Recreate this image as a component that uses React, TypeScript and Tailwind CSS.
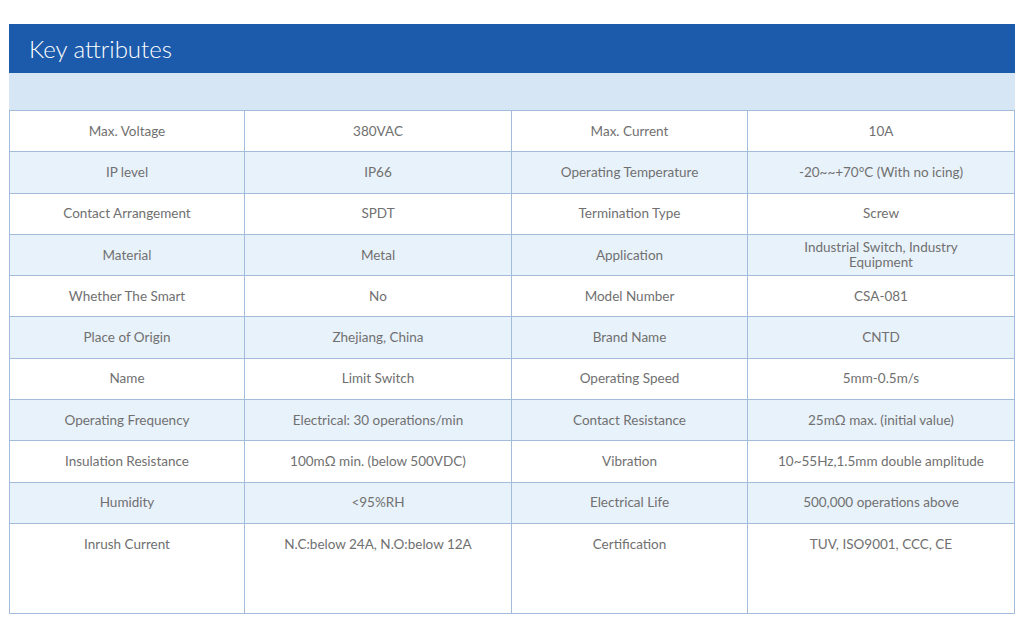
import React from 'react';

const rows: [string, string, string, string][] = [
    ['Max. Voltage', '380VAC', 'Max. Current', '10A'],
    ['IP level', 'IP66', 'Operating Temperature', '-20~~+70°C (With no icing)'],
    ['Contact Arrangement', 'SPDT', 'Termination Type', 'Screw'],
    ['Material', 'Metal', 'Application', 'Industrial Switch, Industry Equipment'],
    ['Whether The Smart', 'No', 'Model Number', 'CSA-081'],
    ['Place of Origin', 'Zhejiang, China', 'Brand Name', 'CNTD'],
    ['Name', 'Limit Switch', 'Operating Speed', '5mm-0.5m/s'],
    ['Operating Frequency', 'Electrical: 30 operations/min', 'Contact Resistance', '25mΩ max. (initial value)'],
    ['Insulation Resistance', '100mΩ min. (below 500VDC)', 'Vibration', '10~55Hz,1.5mm double amplitude'],
    ['Humidity', '<95%RH', 'Electrical Life', '500,000 operations above'],
    ['Inrush Current', 'N.C:below 24A, N.O:below 12A', 'Certification', 'TUV, ISO9001, CCC, CE'],
];

const App: React.FC = () => {
    return (
        <div className="w-[1024px] h-[622px] bg-white pt-6 px-[9px] font-['Lato','Noto_Sans',sans-serif] text-[#707070]">
            <div className="h-[49px] bg-[#1c5bab] flex items-center pl-5">
                <h2 className="text-[24px] font-light text-white leading-none">Key attributes</h2>
            </div>
            <div className="h-[37px] bg-[#d6e6f5]" />
            <table className="w-[1006px] border-collapse table-fixed text-[13.5px] leading-[15px]">
                <colgroup>
                    <col className="w-[235px]" />
                    <col className="w-[267px]" />
                    <col className="w-[236px]" />
                    <col />
                </colgroup>
                <tbody>
                    {rows.map((r, i) => {
                        const last = i === rows.length - 1;
                        return (
                            <tr key={i} className={i % 2 === 1 ? 'bg-[#e8f2fb]' : 'bg-white'}>
                                {r.map((c, j) => (
                                    <td
                                        key={j}
                                        className={
                                            'border border-[#a3bcdb] text-center px-6 ' +
                                            (last ? 'align-top pt-[13px] h-[90px]' : 'align-middle h-[41.3px]')
                                        }
                                    >
                                        {c}
                                    </td>
                                ))}
                            </tr>
                        );
                    })}
                </tbody>
            </table>
        </div>
    );
};

export default App;
